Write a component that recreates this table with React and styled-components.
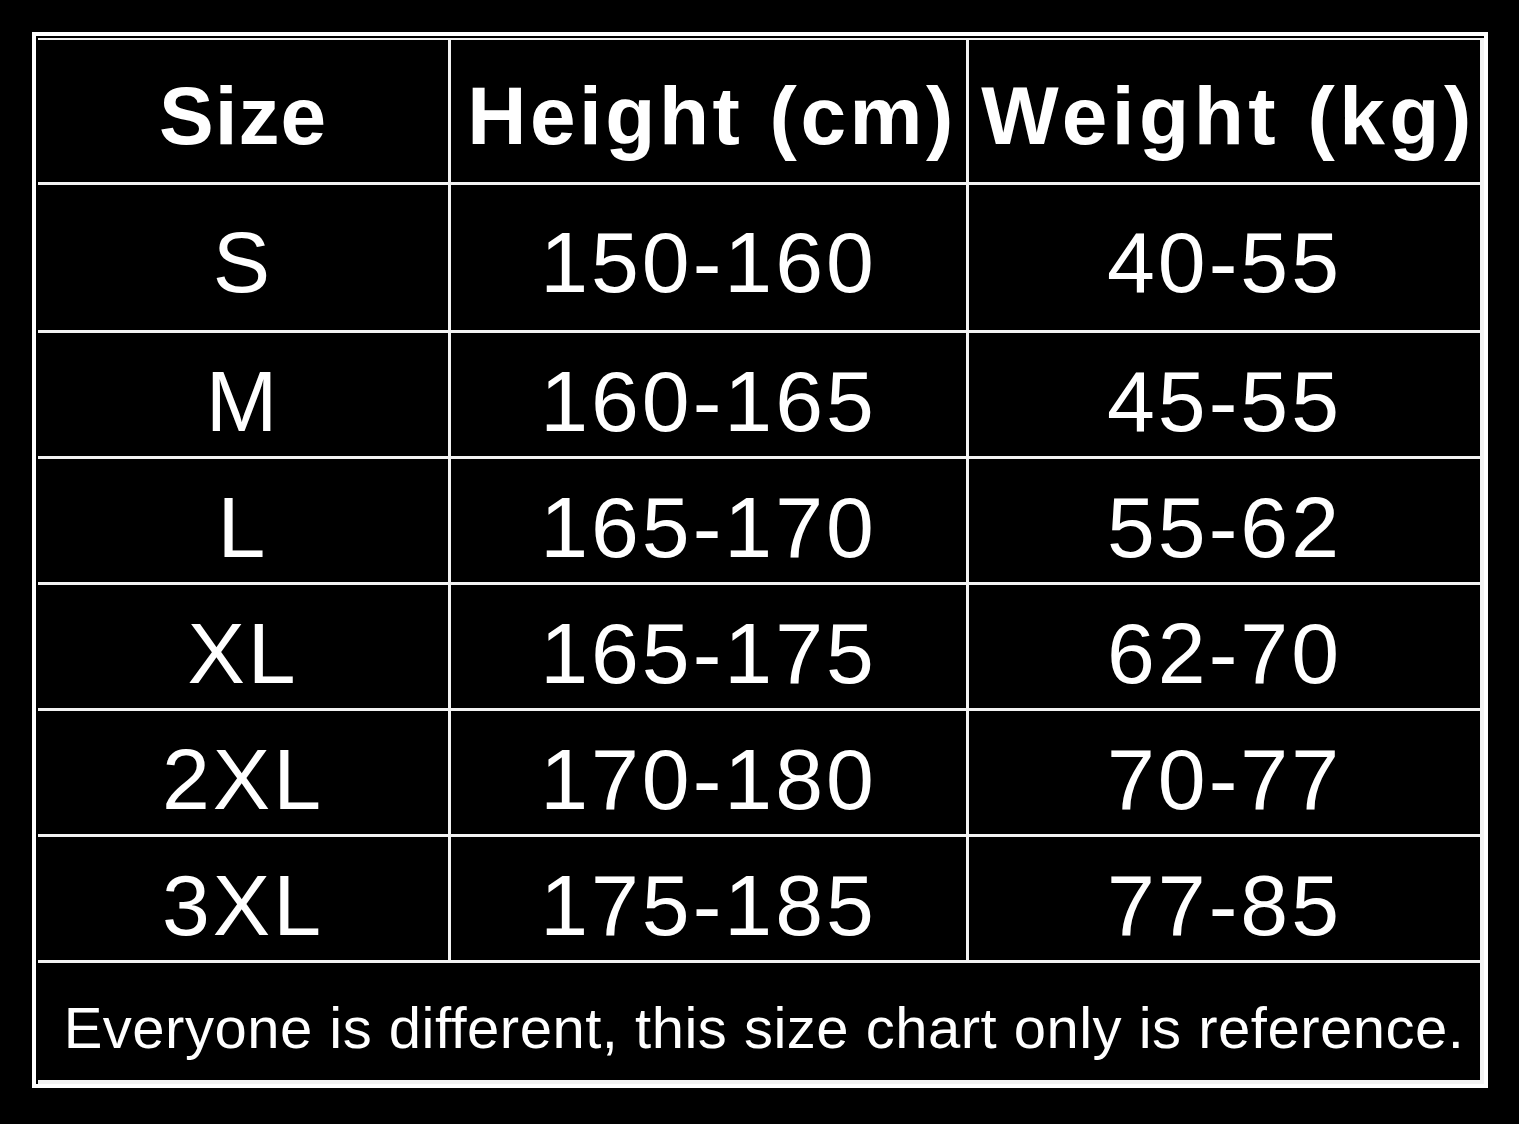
import React from "react";
import styled, { createGlobalStyle } from "styled-components";

const GlobalStyle = createGlobalStyle`
  html, body {
    margin: 0;
    padding: 0;
    background: #000;
  }
  body {
    width: 1519px;
    height: 1124px;
    overflow: hidden;
    font-family: "Liberation Sans", Arial, sans-serif;
  }
`;

const Page = styled.div`
  padding: 32px 0 0 32px;
`;

const Frame = styled.div`
  display: inline-block;
  border: 4px solid #fff;
  padding: 2px 0 0 2px;
  background: #000;
`;

const Grid = styled.div`
  display: grid;
  grid-template-columns: 410px 515px 511px;
  grid-template-rows: 142px 145px repeat(5, 123px) 117px;
  gap: 3px;
  padding: 2px 4px 4px 0;
  background: #f2f2f2;
`;

const Cell = styled.div`
  background: #000;
  color: #fff;
  display: flex;
  align-items: center;
  justify-content: center;
  padding-top: ${p => p.$shift || 12}px;
  padding-left: ${p => p.$indent || 0}px;
  box-sizing: border-box;
  white-space: nowrap;
`;

const HeadCell = styled(Cell)`
  font-weight: 700;
  font-size: 82px;
  letter-spacing: ${p => p.$spacing || 2}px;
`;

const ValueCell = styled(Cell)`
  font-size: 86px;
  letter-spacing: 3px;
`;

const Footer = styled(Cell)`
  grid-column: 1 / 4;
  font-size: 58px;
  letter-spacing: 0.5px;
`;

const rows = [
  ["S", "150-160", "40-55"],
  ["M", "160-165", "45-55"],
  ["L", "165-170", "55-62"],
  ["XL", "165-175", "62-70"],
  ["2XL", "170-180", "70-77"],
  ["3XL", "175-185", "77-85"]
];

export default function App() {
  return (
    <Page>
      <GlobalStyle />
      <Frame>
        <Grid>
          <HeadCell $shift={10} $spacing={1}>Size</HeadCell>
          <HeadCell $shift={10} $spacing={3.5} $indent={7}>Height (cm)</HeadCell>
          <HeadCell $shift={10} $spacing={4.5} $indent={8}>Weight (kg)</HeadCell>
          {rows.map(r =>
            r.map((v, i) => (
              <ValueCell key={r[0] + i} $shift={r[0] === "S" ? 10 : 14}>
                {v}
              </ValueCell>
            ))
          )}
          <Footer $shift={12} $indent={10}>
            Everyone is different, this size chart only is reference.
          </Footer>
        </Grid>
      </Frame>
    </Page>
  );
}
